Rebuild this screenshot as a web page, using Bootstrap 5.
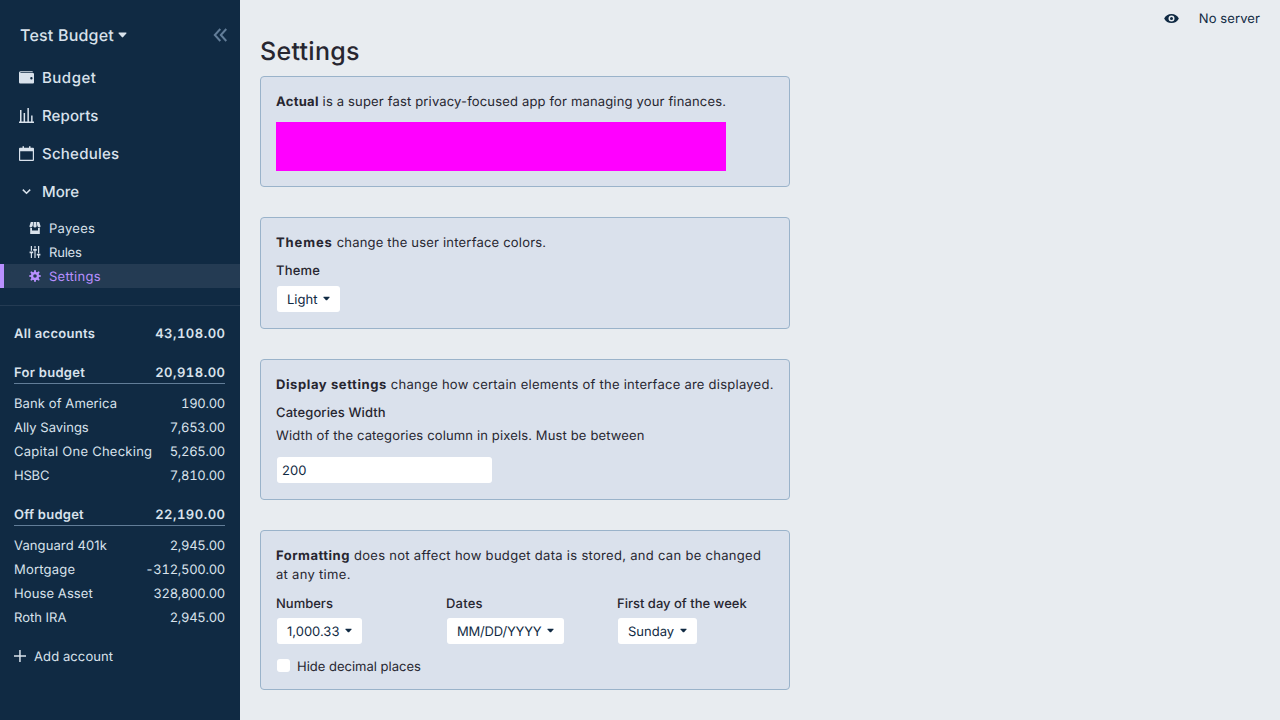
<!DOCTYPE html>
<html lang="en">
<head>
<meta charset="utf-8">
<meta name="viewport" content="width=device-width, initial-scale=1">
<title>Actual - Settings</title>
<link href="https://cdn.jsdelivr.net/npm/bootstrap@5.3.0/dist/css/bootstrap.min.css" rel="stylesheet">
<style>
body{font-family:Inter,sans-serif;font-size:13px;line-height:19px;color:#272630;background:#e8ecf0;height:100vh;overflow:hidden;text-rendering:geometricPrecision}
svg{display:block;flex:none;fill:currentColor}
/* tracking steps */
.tn{letter-spacing:-.2px}.t1{letter-spacing:.1px}.t15{letter-spacing:.165px}.t2{letter-spacing:.2px}.t25{letter-spacing:.25px}.t3{letter-spacing:.3px}.t5{letter-spacing:.5px}.t6{letter-spacing:.6px}.t9{letter-spacing:.9px}
.sidebar{width:240px;background:#102a43;color:#d9e2ec;flex:none}
.budget-name{height:38px;margin-top:16px;padding:0 13px 0 20px;font-size:16px;font-weight:500}
.collapse-icon{color:#627d98}
.main-link{height:38px;padding-left:19px;gap:8px;font-size:15px;font-weight:500;color:inherit}
.main-nav{margin-top:4px}
.sub-nav{margin-top:6px}
.sub-link{height:24px;padding-left:29px;gap:8px;color:inherit}
.sub-link span{padding-top:2px}
.sub-link.active{background:#243b53;color:#b990ff;box-shadow:inset 4px 0 #b990ff}
.rule{height:1px;background:#243b53;margin:17px 0 15px}
.accounts{padding:0 15px 0 14px}
.acct{height:24px;padding-top:2px}
.amount{font-feature-settings:"tnum";letter-spacing:-.28px}
.acct-head{height:24px;padding-top:2px;font-weight:600}
.acct-head .amount{letter-spacing:.5px;margin-right:-.5px}
.group-head{margin-top:15px;height:24px;border-bottom:1px solid #627d98;margin-bottom:7px;padding-top:4px}
.add-acct{height:24px;margin-top:15px;gap:8px}
.add-acct span{padding-top:2px}
.topbar{height:36px;padding-right:20px;gap:20px;color:#102a43}
.topbar span{padding-top:2px}
.page{padding-left:20px}
.page h1{font-size:25px;font-weight:500;line-height:30px;margin:0;padding:1px 0 9px}
.panel{width:530px;background:#dae1ec;border:1px solid #9ab3ca;border-radius:4px;padding:16px 15px 15px;margin-bottom:30px}
.panel strong{font-weight:700}
.lbl{font-weight:500;margin:9px 0 5px}
.hint{margin:-1px 0 11px;letter-spacing:.14px}
.banner{width:450px;height:49px;background:#f0f;margin-top:10px}
.pick{line-height:19px;height:26px;margin:1px;padding:2px 10px 0;background:#fff;border:0;border-radius:3px;color:#102a43;gap:6px;text-rendering:inherit}
.pick svg{margin-top:-3px}
.width-input{width:215px;height:26px;padding:1px 5px 0;margin:1px;border:0;border-radius:3px;color:#102a43;font-size:13px;text-rendering:inherit}
.fmt-col{width:170px}
.fmt-col+.fmt-col{width:171px}
.fmt-row .lbl{margin:10px 0 4px}
.check-row{margin-top:10px;height:19px;gap:7px}
.box{width:13px;height:13px;margin:4px 0 0 1px;background:#fff;border-radius:3px}
.check-text{padding-top:3px}
</style>
</head>
<body>
<svg class="d-none"><symbol id="arrow" viewBox="0 0 9 6"><path d="M1 .6h7q.9.1.3 1L5.2 5.100q-.7.600-1.400 0L.7 1.600Q.1.700 1 .6z"/></symbol></svg>
<div class="d-flex h-100">
<aside class="sidebar h-100">
  <div class="budget-name d-flex align-items-center">
    <span class="t2">Test Budget</span>
    <svg class="ms-1" width="9" height="6"><use href="#arrow"/></svg>
    <svg class="collapse-icon ms-auto" width="14" height="14" viewBox="0 0 14 14"><path d="M7.300 1 1.800 7l5.500 6M13.300 1 7.800 7l5.500 6" fill="none" stroke="currentColor" stroke-width="2"/></svg>
  </div>
  <nav class="main-nav">
    <a class="main-link d-flex align-items-center text-decoration-none"><svg width="15" height="15" viewBox="0 0 15 15"><path fill-rule="evenodd" d="M1.500 1.200H13q1 0 1 1H1.700q-.5 0-.5.4t.5.4H14q1 0 1 1v8.500q0 1-1 1H1.200Q0 13.500 0 12.300V2.700Q0 1.200 1.500 1.200zM12.400 7.100a1.200 1.200 0 1 0 0 2.400 1.200 1.200 0 0 0 0-2.400z"/></svg><span class="t5">Budget</span></a>
    <a class="main-link d-flex align-items-center text-decoration-none"><svg width="15" height="15" viewBox="0 0 15 15"><path d="M0 13.500h15V15H0zM1 2h1.500v12H1zM4.600 5h1.500v9H4.600zM8.400 0h1.500v14H8.400zM12.100 7.500h1.500V14h-1.500z"/></svg><span class="t1">Reports</span></a>
    <a class="main-link d-flex align-items-center text-decoration-none"><svg width="15" height="15" viewBox="0 0 15 15"><path fill-rule="evenodd" d="M1 1.700h2.500V.2H5v1.500h5V.2h1.500v1.500H14q1 0 1 1V14q0 1-1 1H1q-1 0-1-1V2.700q0-1 1-1zM1.200 5.200v8.600h12.600V5.200z"/></svg><span class="t25">Schedules</span></a>
    <a class="main-link d-flex align-items-center text-decoration-none"><svg width="15" height="15" viewBox="0 0 15 15"><path d="M3.800 5.600 7.500 9.300l3.700-3.700" fill="none" stroke="currentColor" stroke-width="1.500"/></svg>More</a>
  </nav>
  <nav class="sub-nav">
    <a class="sub-link d-flex align-items-center text-decoration-none"><svg width="12" height="12" viewBox="0 0 20 20"><path d="M18 9.870V20H2V9.870a4.250 4.250 0 0 0 3-.38V14h10V9.500a4.260 4.260 0 0 0 3 .37zM3 0h4l-.67 6.030A3.430 3.430 0 0 1 3 9C1.340 9 .42 7.730.95 6.150L3 0zm5 0h4l.7 6.300c.17 1.500-.91 2.700-2.420 2.700h-.56A2.380 2.380 0 0 1 7.300 6.300L8 0zm5 0h4l2.050 6.150C19.580 7.730 18.650 9 17 9a3.420 3.420 0 0 1-3.330-2.970L13 0z"/></svg><span class="t3">Payees</span></a>
    <a class="sub-link d-flex align-items-center text-decoration-none"><svg width="12" height="12" viewBox="0 0 20 20"><path d="M17 16v4h-2v-4h-2v-3h6v3h-2zM1 9h6v3H1V9zm6-4h6v3H7V5zM3 0h2v8H3V0zm12 0h2v12h-2V0zM9 0h2v4H9V0zM3 12h2v8H3v-8zm6-4h2v12H9V8z"/></svg><span class="tn">Rules</span></a>
    <a class="sub-link active d-flex align-items-center text-decoration-none"><svg width="12" height="12" viewBox="0 0 20 20"><path d="M3.940 6.500L2.220 3.640l1.420-1.420L6.500 3.940c.52-.3 1.100-.54 1.700-.7L9 0h2l.8 3.240c.6.16 1.180.4 1.700.7l2.860-1.720 1.420 1.420-1.720 2.860c.3.52.54 1.100.7 1.700L20 9v2l-3.240.8c-.16.6-.4 1.180-.7 1.700l1.720 2.860-1.420 1.420-2.860-1.720c-.52.3-1.100.54-1.700.7L11 20H9l-.8-3.240c-.6-.16-1.180-.4-1.700-.7l-2.860 1.720-1.420-1.420 1.720-2.860c-.3-.52-.54-1.100-.7-1.700L0 11V9l3.240-.8c.16-.6.4-1.180.7-1.700zM10 13a3 3 0 1 0 0-6 3 3 0 0 0 0 6z"/></svg><span class="t25">Settings</span></a>
  </nav>
  <div class="rule"></div>
  <div class="accounts">
    <div class="acct-head d-flex align-items-center justify-content-between"><span class="t3">All accounts</span><span class="amount">43,108.00</span></div>
    <div class="acct-head group-head d-flex align-items-center justify-content-between"><span class="t3">For budget</span><span class="amount">20,918.00</span></div>
    <div class="acct d-flex align-items-center justify-content-between"><span class="t1">Bank of America</span><span class="amount">190.00</span></div>
    <div class="acct d-flex align-items-center justify-content-between"><span>Ally Savings</span><span class="amount">7,653.00</span></div>
    <div class="acct d-flex align-items-center justify-content-between"><span class="t25">Capital One Checking</span><span class="amount">5,265.00</span></div>
    <div class="acct d-flex align-items-center justify-content-between"><span class="tn">HSBC</span><span class="amount">7,810.00</span></div>
    <div class="acct-head group-head d-flex align-items-center justify-content-between"><span class="t25">Off budget</span><span class="amount">22,190.00</span></div>
    <div class="acct d-flex align-items-center justify-content-between"><span class="t1">Vanguard 401k</span><span class="amount">2,945.00</span></div>
    <div class="acct d-flex align-items-center justify-content-between"><span class="t2">Mortgage</span><span class="amount">-312,500.00</span></div>
    <div class="acct d-flex align-items-center justify-content-between"><span class="t1">House Asset</span><span class="amount">328,800.00</span></div>
    <div class="acct d-flex align-items-center justify-content-between"><span>Roth IRA</span><span class="amount">2,945.00</span></div>
    <div class="add-acct d-flex align-items-center"><svg width="12" height="12" viewBox="0 0 12 12"><path d="M5.200 0h1.500v5.200H12v1.500H6.700V12H5.200V6.700H0V5.200h5.200z"/></svg><span class="t1">Add account</span></div>
  </div>
</aside>
<main class="flex-grow-1">
  <div class="topbar d-flex align-items-center justify-content-end">
    <svg width="15" height="15" viewBox="0 0 20 20"><path d="M.2 10a11 11 0 0 1 19.600 0A11 11 0 0 1 .2 10zm9.800 4a4 4 0 1 0 0-8 4 4 0 0 0 0 8zm0-2a2 2 0 1 1 0-4 2 2 0 0 1 0 4z"/></svg>
    <span class="t1">No server</span>
  </div>
  <div class="page">
    <h1 class="t3">Settings</h1>
    <section class="panel">
      <div class="t15"><strong class="t3">Actual</strong> is a super fast privacy-focused app for managing your finances.</div>
      <div class="banner"></div>
    </section>
    <section class="panel">
      <div class="t2"><strong class="t9">Themes</strong> change the user interface colors.</div>
      <div class="lbl t2">Theme</div>
      <button class="pick d-flex align-items-center">Light <svg width="7" height="5"><use href="#arrow"/></svg></button>
    </section>
    <section class="panel">
      <div class="t25"><strong class="t6">Display settings</strong> change how certain elements of the interface are displayed.</div>
      <div class="lbl t1">Categories Width</div>
      <div class="hint">Width of the categories column in pixels. Must be between</div>
      <input class="width-input d-block" value="200" aria-label="Categories width">
    </section>
    <section class="panel mb-0">
      <div class="t3"><strong class="t5">Formatting</strong> does not affect how budget data is stored, and can be changed at any time.</div>
      <div class="fmt-row d-flex">
        <div class="fmt-col"><div class="lbl">Numbers</div><button class="pick d-flex align-items-center">1,000.33 <svg width="7" height="5"><use href="#arrow"/></svg></button></div>
        <div class="fmt-col"><div class="lbl t2">Dates</div><button class="pick tn d-flex align-items-center">MM/DD/YYYY <svg width="7" height="5"><use href="#arrow"/></svg></button></div>
        <div><div class="lbl">First day of the week</div><button class="pick d-flex align-items-center">Sunday <svg width="7" height="5"><use href="#arrow"/></svg></button></div>
      </div>
      <div class="check-row d-flex"><span class="box"></span><span class="check-text">Hide decimal places</span></div>
    </section>
  </div>
</main>
</div>
<script src="https://cdn.jsdelivr.net/npm/bootstrap@5.3.0/dist/js/bootstrap.bundle.min.js"></script>
</body>
</html>
